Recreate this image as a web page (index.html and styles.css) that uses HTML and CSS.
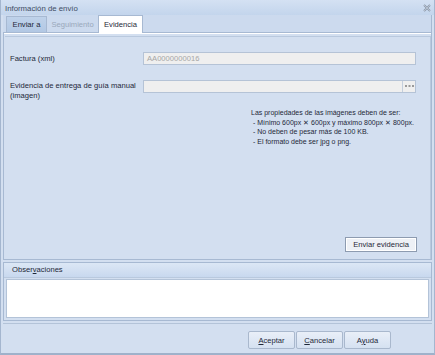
FILE: index.html
```html
<!DOCTYPE html>
<html lang="es">
<head>
    <meta charset="UTF-8">
    <title>Información de envío</title>
    <link rel="stylesheet" href="styles.css">
</head>
<body>
    <div class="window">
        <div class="titlebar">
            <span class="title">Información de envío</span>
            <svg class="close" width="8" height="8" viewBox="0 0 8 8">
                <path d="M1 1 L7 7 M7 1 L1 7" stroke="#8c98aa" stroke-width="1.8"/>
                <path d="M1 1 L7 7 M7 1 L1 7" stroke="#dfe6ef" stroke-width="0.5"/>
            </svg>
        </div>

        <div class="tabs">
            <div class="tab tab-hot">Enviar a</div>
            <div class="tab tab-disabled">Seguimiento</div>
            <div class="tab tab-active">Evidencia</div>
        </div>

        <div class="page">
            <div class="inner">
                <div class="row row-factura">
                    <label class="lbl">Factura (xml)</label>
                    <div class="field">AA0000000016</div>
                </div>
                <div class="row row-evidencia">
                    <label class="lbl">Evidencia de entrega de guía manual<br>(imagen)</label>
                    <div class="field field-browse">
                        <span class="field-text"></span>
                        <span class="dots">
                            <svg width="9" height="3" viewBox="0 0 9 3">
                                <rect x="0" y="0" width="2" height="2" fill="#9a9a9a"/>
                                <rect x="3.5" y="0" width="2" height="2" fill="#9a9a9a"/>
                                <rect x="7" y="0" width="2" height="2" fill="#9a9a9a"/>
                            </svg>
                        </span>
                    </div>
                </div>
                <div class="info">
                    Las propiedades de las imágenes deben de ser:<br>
                    &nbsp;- Mínimo 600px ✕ 600px y máximo 800px ✕ 800px.<br>
                    &nbsp;- No deben de pesar más de 100 KB.<br>
                    &nbsp;- El formato debe ser jpg o png.
                </div>
                <div class="send-row">
                    <button class="btn btn-send">Enviar evidencia</button>
                </div>
            </div>
        </div>

        <div class="notes">
            <div class="notes-head">Obser<u>v</u>aciones</div>
            <div class="notes-box"></div>
        </div>

        <div class="footer">
            <button class="btn btn-foot"><u>A</u>ceptar</button>
            <button class="btn btn-foot"><u>C</u>ancelar</button>
            <button class="btn btn-foot">A<u>y</u>uda</button>
        </div>
    </div>
</body>
</html>
```

FILE: styles.css
```css
body {
    margin: 0;
    font-family: 'Liberation Sans', Arial, sans-serif;
    font-size: 7.6px;
    color: #1e2838;
    background: #d3dff0;
}
.window {
    width: 435px;
    height: 355px;
    box-sizing: border-box;
    background: #d3dff0;
    border-left: 1px solid #a4b6cf;
    border-right: 1px solid #a4b6cf;
    border-bottom: 2px solid #9fb1ca;
    display: flex;
    flex-direction: column;
}
.titlebar {
    height: 15px;
    display: flex;
    align-items: center;
    justify-content: space-between;
    padding: 0 3px 0 4px;
    background: linear-gradient(#d4e1f3, #c3d5ec);
}
.title {
    font-size: 7.8px;
    color: #3e4c63;
    padding-top: 1px;
}
.tabs {
    height: 17px;
    display: flex;
    align-items: flex-end;
    padding-left: 3px;
    margin: 0 2px 0 2px;
    background: #ccdaee;
    border-bottom: 1px solid #a7b9d2;
    border-right: 1px solid #a7b9d2;
}
.tab {
    height: 16px;
    box-sizing: border-box;
    display: flex;
    align-items: center;
    justify-content: center;
    white-space: nowrap;
    border: 1px solid #a7b9d2;
    border-bottom: none;
    margin-right: -1px;
}
.tab-hot {
    width: 41px;
    background: linear-gradient(#bfd2ea, #b2c8e4);
    color: #1e2838;
}
.tab-disabled {
    width: 53px;
    border-color: transparent;
    color: #9aa8bb;
}
.tab-active {
    width: 45px;
    height: 18px;
    margin-bottom: -1px;
    background: #ffffff;
    color: #1e2838;
}
.page {
    height: 227px;
    box-sizing: border-box;
    margin: 0 2px;
    padding: 3px 0 0 1px;
    background: #d3dff0;
    border-left: 1px solid #a7b9d2;
    border-right: 1px solid #a7b9d2;
    border-bottom: 1px solid #a7b9d2;
    box-shadow: inset 0 1px 0 #ffffff;
}
.inner {
    height: 100%;
    box-sizing: border-box;
    border-top: 1px solid #b9c9de;
    border-right: 1px solid #b9c9de;
    padding: 0 14px 0 5px;
    display: flex;
    flex-direction: column;
}
.row {
    display: flex;
    align-items: flex-start;
}
.row-factura {
    margin-top: 15px;
}
.row-evidencia {
    margin-top: 15px;
}
.lbl {
    width: 133px;
    line-height: 10px;
    padding-top: 1px;
}
.row-factura .lbl {
    padding-top: 2px;
}
.field {
    flex: 1;
    height: 13px;
    box-sizing: border-box;
    border: 1px solid #b5c3d6;
    background: #efefef;
    color: #a6a6a6;
    padding: 1px 3px;
    line-height: 10px;
}
.field-browse {
    display: flex;
    padding: 0;
}
.field-text {
    flex: 1;
}
.dots {
    width: 12px;
    border-left: 1px solid #c4cfdd;
    display: flex;
    align-items: center;
    justify-content: center;
}
.info {
    margin: 7px 0 0 241px;
    font-size: 7px;
    line-height: 9.6px;
    color: #1e2838;
    white-space: nowrap;
}
.send-row {
    margin-top: auto;
    margin-bottom: 7px;
    display: flex;
    justify-content: flex-end;
}
.btn {
    font-family: 'Liberation Sans', Arial, sans-serif;
    font-size: 7.6px;
    color: #1e2838;
    box-sizing: border-box;
    padding: 0;
    cursor: pointer;
}
.btn-send {
    width: 72px;
    height: 15px;
    margin-right: -1px;
    background: #eef1f6;
    border: 1px solid #8d9bb0;
    box-shadow: inset 0 0 0 1px #ffffff;
}
.notes {
    margin: 2px 2px 0 2px;
    height: 59px;
    box-sizing: border-box;
    border: 1px solid #a7b9d2;
    display: flex;
    flex-direction: column;
}
.notes-head {
    height: 14px;
    padding-left: 8px;
    line-height: 14px;
    background: linear-gradient(#dce7f5, #c8d8ee);
    border-bottom: 1px solid #b9c9de;
    color: #1e2838;
}
.notes-box {
    flex: 1;
    margin: 1px 2px 2px 2px;
    background: #ffffff;
    border: 1px solid #b3c3d8;
}
.footer {
    flex: 1;
    margin: 2px 2px 0 2px;
    border-top: 1px solid #b3c3d8;
    display: flex;
    justify-content: flex-end;
    align-items: center;
    padding-right: 41px;
    padding-top: 3px;
    gap: 1px;
}
.btn-foot {
    width: 47px;
    height: 18px;
    background: linear-gradient(#e9eff8, #d5e1f1);
    border: 1px solid #a9b8cd;
    border-radius: 2px;
}
```
